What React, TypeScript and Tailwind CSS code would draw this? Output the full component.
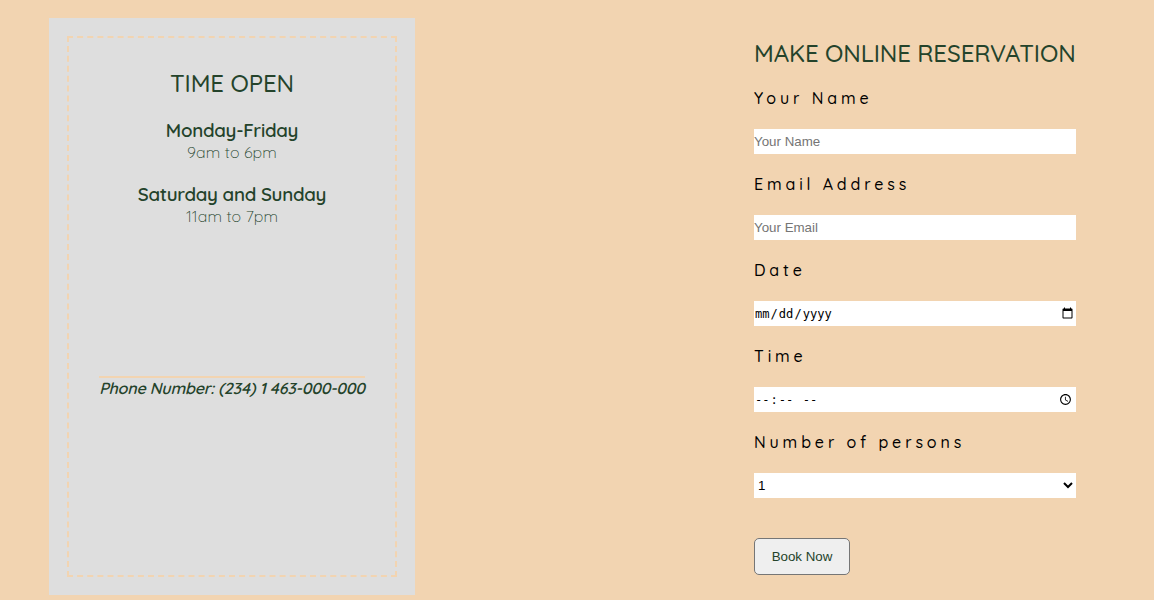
import type { ReactNode } from "react";

const control =
  "block h-[25px] w-full rounded-none border-0 bg-white p-0 text-[13.333px] outline-none placeholder:text-[#757575]";

const picker =
  "font-['DejaVu_Sans_Mono',monospace] text-black [&::-webkit-datetime-edit]:pt-0.5 [&::-webkit-datetime-edit]:text-[12.1px]";

function Field({ label, children }: { label: string; children: ReactNode }) {
  return (
    <label className="block h-[86px]">
      <span className="block h-[41px] text-[16px] leading-5 font-medium tracking-[3.87px] whitespace-nowrap text-black">
        {label}
      </span>
      {children}
    </label>
  );
}

function Hours({ days, time }: { days: string; time: string }) {
  return (
    <div className="h-16 whitespace-nowrap">
      <h3 className="text-[18.72px] leading-6 font-semibold tracking-[-0.28px]">{days}</h3>
      <p className="text-[16px] leading-5 font-light tracking-[0.1px]">{time}</p>
    </div>
  );
}

export default function App() {
  return (
    <main className="flex h-[600px] w-full items-start justify-between overflow-hidden bg-[#f2d4b1] pl-[49px] pr-[78px] font-['Quicksand','Lato',sans-serif] text-[#24432b]">
      <section className="mt-[18px] h-[577px] w-[366px] bg-[#dedede] p-[18px]">
        <div className="flex h-[541px] flex-col items-center border-2 border-dashed border-[#f2d4b1] text-center">
          <h2 className="mt-[30px] h-[50px] text-[24px] leading-[30px] font-medium tracking-[-0.1px] whitespace-nowrap">TIME OPEN</h2>
          <Hours days="Monday-Friday" time="9am to 6pm" />
          <Hours days="Saturday and Sunday" time="11am to 7pm" />
          <p className="mt-[130px] h-6 w-[266px] border-t-2 border-[#f2d4b1] text-[16px] leading-[21px] font-semibold tracking-[-0.21px] whitespace-nowrap italic">
            Phone Number: (234) 1 463-000-000
          </p>
        </div>
      </section>

      <form className="mt-[37px] w-[322px]" onSubmit={(e) => e.preventDefault()}>
        <h2 className="h-[51px] text-[24px] leading-8 font-medium tracking-[-0.1px] whitespace-nowrap">MAKE ONLINE RESERVATION</h2>
        <Field label="Your Name">
          <input className={`${control} font-['Liberation_Sans',sans-serif]`} placeholder="Your Name" />
        </Field>
        <Field label="Email Address">
          <input type="email" className={`${control} font-['Liberation_Sans',sans-serif]`} placeholder="Your Email" />
        </Field>
        <Field label="Date">
          <input type="date" className={`${control} ${picker}`} />
        </Field>
        <Field label="Time">
          <input type="time" className={`${control} ${picker}`} />
        </Field>
        <Field label="Number of persons">
          <select className={`${control} font-['Liberation_Sans',sans-serif] text-black`}>
            <option>1</option>
            <option>2</option>
            <option>3</option>
            <option>4</option>
          </select>
        </Field>
        <button className="mt-5 block h-[37px] w-24 rounded-[5px] border border-[#767676] bg-[#efefef] font-['Liberation_Sans',sans-serif] text-[13.333px] text-[#24432b]">
          Book Now
        </button>
      </form>
    </main>
  );
}
